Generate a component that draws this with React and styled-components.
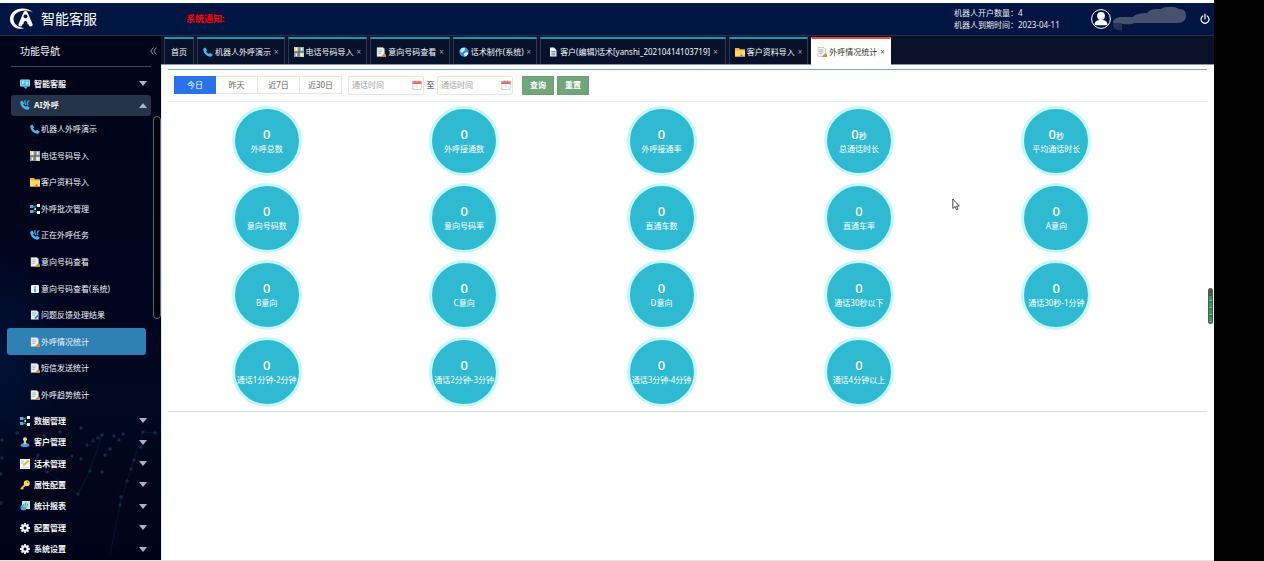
import React from "react";
import styled, { createGlobalStyle } from "styled-components";

const GlobalStyle = createGlobalStyle`
  * { box-sizing: border-box; }
  body {
    margin: 0;
    background: #000;
    font-family: "Noto Sans", "Noto Sans CJK SC", sans-serif;
    font-size: 8px;
    line-height: 12px;
    color: #333;
  }
  button, input { font: inherit; }
  a { color: inherit; text-decoration: none; }
  ul { list-style: none; margin: 0; padding: 0; }
  svg { display: block; flex: none; }
`;

/* ---------- layout ---------- */
const Shell = styled.div`
  display: flex;
  flex-direction: column;
  min-height: 100vh;
  margin-right: 50px;
  border-top: 3px solid #fff;
  border-bottom: 1px solid #e4e4e4;
  background: #fff;
  position: relative;
`;
const Header = styled.header`
  display: flex;
  align-items: center;
  height: 33px;
  padding: 0 4px 0 9px;
  background: #001542;
  border-bottom: 1px solid #26304a;
  color: #fff;
`;
const Brand = styled.h1`
  display: flex;
  align-items: center;
  gap: 6px;
  margin: 0;
  font-size: 14px;
  line-height: 20px;
  font-weight: 400;
`;
const Notice = styled.strong`
  margin-left: 89px;
  font-size: 9px;
  color: #f00;
`;
const Account = styled.div`
  display: flex;
  align-items: center;
  margin-left: auto;
`;
const Quota = styled.div`
  width: 137px;
  color: #e9edf5;
`;
const IconButton = styled.button`
  display: flex;
  padding: 0;
  border: 0;
  background: none;
  color: ${(p) => p.$color || "#fff"};
  margin-left: ${(p) => p.$push || "0"};
  cursor: pointer;
`;
const Body = styled.div`
  display: flex;
  flex: 1;
`;

/* ---------- sidebar ---------- */
const Sidebar = styled.aside`
  position: relative;
  width: 161px;
  flex: none;
  color: #f1f4f8;
  background:
    radial-gradient(ellipse 70px 110px at 0 320px, #001238 0%, transparent 100%),
    linear-gradient(#000418, #01051d 45%, #01081f 70%, #000318);
`;
const Backdrop = styled.svg`
  position: absolute;
  left: 0;
  bottom: 0;
  width: 100%;
  pointer-events: none;
`;
const SideTitle = styled.div`
  display: flex;
  align-items: center;
  justify-content: space-between;
  height: 31px;
  margin: 0 10px 6px 11px;
  padding: 0 0 0 9px;
  border-bottom: 1px solid #3c4a60;
  h2 { margin: 0; font-size: 10px; line-height: 14px; font-weight: 400; }
  button { margin-right: -6px; }
`;
const Nav = styled.nav`
  position: relative;
`;
const GroupList = styled.ul`
  display: grid;
  grid-auto-rows: 1fr;
  height: ${(p) => p.$height};
`;
const GroupLink = styled.a`
  display: flex;
  align-items: center;
  gap: 4px;
  height: 100%;
  margin: 0 10px 0 11px;
  padding: 0 4px 0 9px;
  border-radius: 3px;
  font-weight: 700;
  background: ${(p) => (p.$open ? "#263449" : "transparent")};
  > :last-child { margin-left: auto; }
`;
const SubScroll = styled.div`
  position: relative;
  padding-bottom: 2px;
`;
const SubLink = styled.a`
  display: flex;
  align-items: center;
  gap: 1px;
  height: 100%;
  margin: 0 15px 0 7px;
  padding-left: 23px;
  border-radius: 3px;
  background: ${(p) => (p.$active ? "#2f80b3" : "transparent")};
`;
const ScrollThumb = styled.div`
  position: absolute;
  top: 0;
  right: 0;
  width: 8px;
  height: 203px;
  border: 1px solid #626975;
  border-radius: 4px;
  background: #00020c;
`;

/* ---------- main ---------- */
const Main = styled.main`
  flex: 1;
  min-width: 0;
  border-left: 1px solid #e3e6ea;
`;
const TabBar = styled.nav`
  display: flex;
  align-items: stretch;
  gap: 3px;
  height: 29px;
  padding: 1px 0 0 3px;
  margin-left: -1px;
  background: #0a1128;
  border-bottom: 1px solid #8d929e;
`;
const Tab = styled.a`
  display: flex;
  align-items: center;
  gap: 2px;
  margin-bottom: ${(p) => (p.$active ? "-1px" : "0")};
  padding: 0 ${(p) => (p.$wide ? "7px" : p.$plain ? "6px" : "5px")} 0 ${(p) => (p.$wide ? "7px" : p.$plain ? "6px" : "5px")};
  border: 1px solid ${(p) => (p.$active ? "#fff" : "#2a3850")};
  border-bottom: 0;
  border-top: 2px solid ${(p) => (p.$active ? "#e04a3c" : "#1899b8")};
  background: ${(p) => (p.$active ? "#fff" : "#08112a")};
  color: ${(p) => (p.$active ? "#333" : "#f4f7fb")};
  white-space: nowrap;
`;
const Close = styled.span`
  margin-left: 1px;
  color: ${(p) => (p.$active ? "#555" : "#9aa3b3")};
`;
const Panel = styled.section`
  margin: 4px 7px 0 6px;
  border-top: 1px solid #74acd4;
`;
const Filters = styled.form`
  display: flex;
  align-items: center;
  height: 32px;
  padding: 0 6px 1px;
  border-bottom: 1px solid #ececec;
`;
const Segments = styled.div`
  display: flex;
  margin-right: 6px;
`;
const Segment = styled.button`
  width: 42px;
  height: 18px;
  padding: 0;
  border: 1px solid ${(p) => (p.$active ? "#2a72ea" : "#e4e6ea")};
  border-left-width: ${(p) => (p.$active ? "1px" : "0")};
  background: ${(p) => (p.$active ? "#2a72ea" : "#fff")};
  color: ${(p) => (p.$active ? "#fff" : "#666")};
  cursor: pointer;
`;
const DateField = styled.label`
  display: flex;
  align-items: center;
  width: 76px;
  height: 19px;
  padding: 0 1px 0 3px;
  border: 1px solid #e6e6e6;
  border-radius: 2px;
  input {
    flex: 1;
    min-width: 0;
    padding: 0;
    border: 0;
    outline: 0;
    background: none;
    color: #555;
  }
  input::placeholder { color: #a4a4a4; }
`;
const Joiner = styled.span`
  width: 13px;
  text-align: center;
`;
const Action = styled.button`
  width: 32px;
  height: 19px;
  margin-left: ${(p) => (p.$first ? "9px" : "3px")};
  padding: 0;
  border: 1px solid #6b9f74;
  background: #71a57a;
  color: #fff;
  font-weight: 700;
  cursor: pointer;
`;
const Stats = styled.ul`
  display: grid;
  grid-template-columns: repeat(5, 19%);
  justify-items: center;
  row-gap: 7px;
  padding: 4px 0;
  border-bottom: 1px solid #dcdcdc;
`;
const Stat = styled.li`
  display: flex;
  flex-direction: column;
  align-items: center;
  justify-content: center;
  width: 70px;
  height: 70px;
  padding-bottom: 2px;
  border: 3px solid #c5f8fd;
  border-radius: 50%;
  background: #2fbad2;
  color: #fff;
  white-space: nowrap;
`;
const StatValue = styled.div`
  height: 18px;
  font-size: 13px;
  line-height: 18px;
  font-weight: 500;
  small { font-size: 8px; line-height: 12px; }
`;
const Level = styled.div`
  position: absolute;
  right: 1px;
  top: 285px;
  width: 5px;
  height: 36px;
  border: 1px solid #555;
  border-top-width: 8px;
  border-radius: 3px;
  background: repeating-linear-gradient(#2f9a5c 0 4px, #72b48b 4px 5px, #27854e 5px 7px);
`;
const Pointer = styled.svg`
  position: absolute;
  left: 952px;
  top: 195px;
`;

/* ---------- icons ---------- */
const glyphs = {
  chat: (
    <>
      <rect x="0" y="0.5" width="10" height="7" rx="1" fill="#8fe4f6" />
      <rect x="1" y="1.5" width="8" height="5" fill="#43b4de" />
      <path d="M2.500 5.500v-3h1.500v1.500H2.500M7.500 3H5.800v1h1.700v1.200H5.800" stroke="#e9fbff" strokeWidth=".7" fill="none" />
      <path d="M3 7.500h4.500L6 10z" fill="#55bfe4" />
    </>
  ),
  phone: <path d="M.3 1.800 2.300.6l1.800 2.600-.9 1.300c.6 1.100 1.400 1.800 2.600 2.200l1.300-.8 2.700 1.600-1.200 2C4.500 10.500-.3 6 .3 1.800z" fill="#48b4ef" />,
  phones: (
    <>
      <path d="M.3 1.800 2.300.6l1.800 2.600-.9 1.300c.6 1.100 1.400 1.800 2.600 2.200l1.300-.8 2.700 1.600-1.200 2C4.500 10.500-.3 6 .3 1.800z" fill="#48b4ef" />
      <path d="M5 .8c-.4 1.500-.2 2.700.8 3.800M8.800.8C7.300 1.700 7 3.200 7.800 4.800" fill="none" stroke="#3a9cdc" strokeWidth="1.400" strokeLinecap="round" />
    </>
  ),
  tiles: (
    <>
      <rect width="10" height="10" fill="#c9d6df" />
      <path d="M0 0h4.500v4.500H0z" fill="#e9cd80" />
      <path d="M5.500 0H10v4.500H5.500z" fill="#8fb4d3" />
      <path d="M0 5.500h4.500V10H0z" fill="#7ea3c4" />
      <path d="M5.500 5.500H10V10H5.500z" fill="#e2d3a4" />
      <path d="M5 0v10M0 5h10" stroke="#3c4654" />
      <path d="M2.300 1v2.500M7.700 1v2.500M2.300 6.500V9M7.700 6.500V9" stroke="#fff" strokeWidth="1.200" />
    </>
  ),
  folder: (
    <>
      <path d="M0 1h4l1 1.300h5V9.500H0z" fill="#eeb534" />
      <path d="M0 3.500h10v6H0z" fill="#ffd96e" />
      <path d="M4.500 9.500 6.500 6.800l2 2.700z" fill="#c9822b" />
    </>
  ),
  nodes: (
    <>
      <path d="M3.500 2.500 8 1.500M3.500 7.500 8 8.500M5 2v6" stroke="#6fa6b8" strokeWidth=".7" />
      <path d="M0 1h3.500v3H0zM0 6h3.500v3H0z" fill="#3fb8d8" />
      <path d="M7 0h3v3H7zM7 7h3v3H7z" fill="#f1f6f9" />
      <path d="M4.500 4h1.500v2H4.500z" fill="#bfe3ee" />
    </>
  ),
  doc: (
    <>
      <path d="M1 .5h6l1.500 1.500v7.500H1z" fill="#eef1f3" stroke="#a9afb6" strokeWidth=".5" />
      <path d="M2.200 3h4M2.200 4.700h4M2.200 6.400h3" stroke="#9aa5b0" strokeWidth=".7" />
      <path d="M5 9.500 8.500 6 10 7.500V10H5.500z" fill="#c9953c" />
    </>
  ),
  info: (
    <>
      <rect x="1" y="1" width="8" height="8" rx="1" fill="#e6f6fb" />
      <path d="M5 2.500v1.200M5 4.500V8" stroke="#2596c4" strokeWidth="1.600" />
    </>
  ),
  edit: (
    <>
      <path d="M1 .5h6l1.500 1.500v7.500H1z" fill="#e3edf3" />
      <path d="M2.200 3h4M2.200 5h3" stroke="#7c96a8" strokeWidth=".7" />
      <path d="M5 8.500 9 4.500" stroke="#2f8fca" strokeWidth="1.800" />
    </>
  ),
  user: (
    <>
      <path d="M.5 9C.5 6.800 2.500 6 5 6s4.500.8 4.500 3c-2 1.300-7 1.300-9 0z" fill="#3fa1dc" />
      <circle cx="5" cy="2.300" r="2" fill="#f0d5ae" />
      <path d="M4.200 3.500h1.600L6.500 7h-3z" fill="#f0c48c" />
    </>
  ),
  note: (
    <>
      <rect width="10" height="10" fill="#f1f6f4" />
      <path d="M1 8h8v1H1zM1 1h3v4H1z" fill="#c3dfe4" />
      <path d="M3.500 6.500 8.500 1.500" stroke="#eeb83a" strokeWidth="2" />
    </>
  ),
  key: (
    <>
      <path d="M5.500 4.500 .8 9.200M2 8l1.200 1.200" stroke="#f0b93a" strokeWidth="1.800" />
      <circle cx="6.800" cy="3.200" r="3" fill="#ffd45a" />
      <circle cx="7.700" cy="2.300" r=".8" fill="#8d6111" />
    </>
  ),
  report: (
    <>
      <path d="M2 0h8v8H2z" fill="#bfe0ee" />
      <path d="M3.500 5V3M5.500 5V1.500M7.500 5V2.500" stroke="#4d8db2" />
      <circle cx="3.500" cy="6.500" r="3" fill="#3da5d8" />
      <path d="M3.500 6.500V3.500a3 3 0 0 1 3 3z" fill="#8bd06c" />
    </>
  ),
  gear: (
    <>
      <path d="M5 0v10M0 5h10M1.500 1.500l7 7M8.500 1.500l-7 7" stroke="#eef0f3" strokeWidth="1.800" />
      <circle cx="5" cy="5" r="2.700" fill="none" stroke="#eef0f3" strokeWidth="2" />
      <circle cx="5" cy="5" r="1.500" fill="#050a20" />
    </>
  ),
  globe: (
    <>
      <circle cx="5" cy="5" r="4.700" fill="#2d93d6" />
      <path d="M2 1.500 5.500.8 6 3 3.500 5.500 1 5z" fill="#bfeaf6" />
      <path d="M5 6.500 8 5l1.500 1-2 3.200-2 .3z" fill="#e8f7fb" />
    </>
  ),
  file: (
    <>
      <path d="M2 .5h4l2.500 2.500v6.500H2z" fill="#eef2f6" />
      <path d="M3.300 4.500h4M3.300 6.200h4M3.300 7.900h4" stroke="#53627a" strokeWidth=".8" />
    </>
  ),
  calendar: (
    <>
      <path d="M.8 1h8.400v8.500H.8z" fill="#fff" stroke="#c2c2c2" strokeWidth=".7" />
      <path d="M.5 1h9v3h-9z" fill="#df6a5d" />
      <path d="M2 0v2.500M5 0v2.500M8 0v2.500" stroke="#fff" strokeWidth=".6" />
      <path d="M5 5.500v2" stroke="#c4c4c4" strokeWidth=".8" />
    </>
  ),
};
const Icon = ({ name }) => (
  <svg width="10" height="10" viewBox="0 0 10 10" aria-hidden="true">{glyphs[name]}</svg>
);
const Arrow = ({ up }) => (
  <svg width="8" height="5" viewBox="0 0 8 5" aria-hidden="true">
    <path d={up ? "M0 5 4 0l4 5z" : "M0 0h8L4 5z"} fill="#aab4c2" />
  </svg>
);
const Logo = () => (
  <svg width="26" height="22" viewBox="0 0 26 22" aria-hidden="true">
    <path d="M24 4.500C19-.8 9.500-.8 4.500 3.500-.8 8 0 16 5.500 19.200 9 21.200 13 21 15.500 20 9.500 19.800 4.800 16.500 4.500 11.500 4.200 4.500 14-.5 24 4.500z" fill="#fff" />
    <path d="M14.500 4.200c.7-1.500 3.300-1.500 4 0L23.500 16c.6 1.500-.4 2.500-1.800 2.500-1.300 0-1.700-.8-2.200-2.200h-6c-.5 1.400-1 2.200-2.200 2.200-1.400 0-2.300-1-1.700-2.500z" fill="#f5f8fc" />
    <circle cx="16.500" cy="8.300" r="1.900" fill="#001542" />
    <path d="M14.300 18.500c0-4.200.7-5.500 2.200-5.500s2.200 1.300 2.200 5.500z" fill="#001542" />
  </svg>
);
const Avatar = () => (
  <svg width="20" height="20" viewBox="0 0 20 20" aria-hidden="true">
    <circle cx="10" cy="10" r="9.400" fill="none" stroke="#fff" strokeWidth="1" />
    <circle cx="10" cy="7" r="3.900" fill="#fff" />
    <path d="M3.500 16.300c0-3.600 2-4.800 4.500-5.300h4c2.500.5 4.500 1.700 4.500 5.300z" fill="#fff" />
  </svg>
);
const NameMask = () => (
  <svg width="76" height="26" viewBox="0 0 76 26" aria-hidden="true">
    <path d="M2 17c0-4 4-6 9-6h11c2-3 8-4 14-4 3-4 8-4 14-4 4-3 14-3 18 0 6 0 7 3 7 7s-3 7-9 7H24c-5 2-9 1-13 1z" fill="#46516d" />
    <path d="M2 17h9v7c-5 1-8-1-9-4z" fill="#26324f" />
  </svg>
);
const Power = () => (
  <svg width="10" height="12" viewBox="0 0 10 12" fill="none" stroke="currentColor" strokeWidth="1.200" strokeLinecap="round" aria-hidden="true">
    <path d="M5 1v5M2.800 3a4 4 0 1 0 4.400 0" />
  </svg>
);
const Collapse = () => (
  <svg width="7" height="8" viewBox="0 0 7 8" fill="none" stroke="currentColor" aria-hidden="true">
    <path d="M3.300.5.8 4l2.500 3.500M6.300.5 3.800 4l2.500 3.500" />
  </svg>
);

/* ---------- data ---------- */
const topGroups = [["chat", "智能客服"], ["phones", "AI外呼", true]];
const subItems = [
  ["phone", "机器人外呼演示"], ["tiles", "电话号码导入"], ["folder", "客户资料导入"],
  ["nodes", "外呼批次管理"], ["phones", "正在外呼任务"], ["doc", "意向号码查看"],
  ["info", "意向号码查看(系统)"], ["edit", "问题反馈处理结果"], ["doc", "外呼情况统计", true],
  ["doc", "短信发送统计"], ["doc", "外呼趋势统计"],
];
const lowerGroups = [
  ["nodes", "数据管理"], ["user", "客户管理"], ["note", "话术管理"], ["key", "属性配置"],
  ["report", "统计报表"], ["gear", "配置管理"], ["gear", "系统设置"],
];
const tabs = [
  { label: "首页" },
  { icon: "phone", label: "机器人外呼演示" },
  { icon: "tiles", label: "电话号码导入" },
  { icon: "doc", label: "意向号码查看" },
  { icon: "globe", label: "话术制作(系统)" },
  { icon: "file", label: "客户(编辑)话术[yanshi_20210414103719]", wide: true },
  { icon: "folder", label: "客户资料导入" },
  { icon: "doc", label: "外呼情况统计", active: true },
];
const stats = [
  "外呼总数", "外呼接通数", "外呼接通率", "总通话时长", "平均通话时长",
  "意向号码数", "意向号码率", "直通车数", "直通车率", "A意向",
  "B意向", "C意向", "D意向", "通话30秒以下", "通话30秒-1分钟",
  "通话1分钟-2分钟", "通话2分钟-3分钟", "通话3分钟-4分钟", "通话4分钟以上",
];
const dots = [
  [2, 50], [2, 68], [17, 43], [44, 46], [60, 42], [81, 38], [87, 55], [93, 51], [98, 48], [102, 45],
  [114, 46], [119, 50], [123, 44], [110, 59], [105, 65], [72, 66], [81, 69], [90, 81], [102, 82],
  [38, 65], [47, 82], [78, 104], [1, 84], [1, 113], [143, 42], [141, 57], [134, 70], [131, 79],
  [127, 91], [121, 107], [120, 115], [155, 43],
];

const Groups = ({ items, height }) => (
  <GroupList $height={height}>
    {items.map(([icon, label, open]) => (
      <li key={label}>
        <GroupLink href="#" $open={open}>
          <Icon name={icon} />
          <span>{label}</span>
          <Arrow up={open} />
        </GroupLink>
      </li>
    ))}
  </GroupList>
);

export default function App() {
  return (
    <>
      <GlobalStyle />
      <Shell>
        <Header>
          <Brand><Logo />智能客服</Brand>
          <Notice>系统通知:</Notice>
          <Account>
            <Quota>
              <div>机器人开户数量：4</div>
              <div>机器人到期时间：2023-04-11</div>
            </Quota>
            <Avatar />
            <NameMask />
            <IconButton type="button" aria-label="退出" $push="13px"><Power /></IconButton>
          </Account>
        </Header>
        <Body>
          <Sidebar>
            <Backdrop viewBox="0 0 161 170" aria-hidden="true">
              <path d="M155 43 143 42 127 91 120 115 110 165M47 82 78 104 90 81 102 45" fill="none" stroke="#08203a" strokeWidth=".6" />
              {dots.map(([x, y]) => <circle key={`${x}-${y}`} cx={x} cy={y} r="1.700" fill="#0c2e49" />)}
            </Backdrop>
            <SideTitle>
              <h2>功能导航</h2>
              <IconButton type="button" aria-label="收起" $color="#8995a8"><Collapse /></IconButton>
            </SideTitle>
            <Nav>
              <Groups items={topGroups} height="43px" />
              <SubScroll>
                <GroupList $height="292px">
                  {subItems.map(([icon, label, active]) => (
                    <li key={label}>
                      <SubLink href="#" $active={active}><Icon name={icon} /><span>{label}</span></SubLink>
                    </li>
                  ))}
                </GroupList>
                <ScrollThumb />
              </SubScroll>
              <Groups items={lowerGroups} height="150px" />
            </Nav>
          </Sidebar>
          <Main>
            <TabBar>
              {tabs.map(({ icon, label, active, wide }) => (
                <Tab key={label} href="#" $active={active} $plain={!icon} $wide={wide}>
                  {icon && <Icon name={icon} />}
                  <span>{label}</span>
                  {icon && <Close $active={active}>×</Close>}
                </Tab>
              ))}
            </TabBar>
            <Panel>
              <Filters>
                <Segments>
                  {["今日", "昨天", "近7日", "近30日"].map((label, i) => (
                    <Segment key={label} type="button" $active={i === 0}>{label}</Segment>
                  ))}
                </Segments>
                <DateField><input placeholder="通话时间" aria-label="开始通话时间" /><Icon name="calendar" /></DateField>
                <Joiner>至</Joiner>
                <DateField><input placeholder="通话时间" aria-label="结束通话时间" /><Icon name="calendar" /></DateField>
                <Action type="button" $first>查询</Action>
                <Action type="button">重置</Action>
              </Filters>
              <Stats>
                {stats.map((label, i) => (
                  <Stat key={label}>
                    <StatValue>0{(i === 3 || i === 4) && <small>秒</small>}</StatValue>
                    <div>{label}</div>
                  </Stat>
                ))}
              </Stats>
            </Panel>
          </Main>
        </Body>
        <Level />
        <Pointer width="8" height="13" viewBox="0 0 8 13" aria-hidden="true">
          <path d="M.8 1v9.500L3 8.600l1.500 3.200 1.500-.7-1.500-3h2.800z" fill="#fff" stroke="#333" strokeWidth=".9" />
        </Pointer>
      </Shell>
    </>
  );
}
